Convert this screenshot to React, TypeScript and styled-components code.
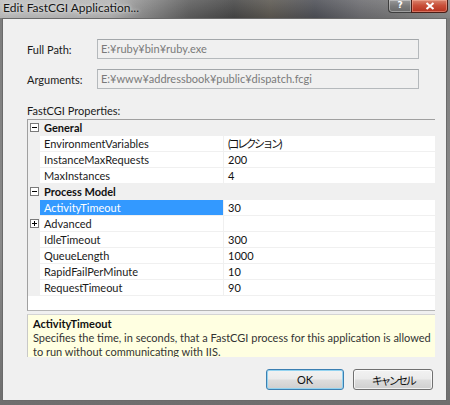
import React from "react";
import styled, { createGlobalStyle } from "styled-components";

const GlobalStyle = createGlobalStyle`
  html, body {
    margin: 0;
    padding: 0;
  }
  body {
    width: 450px;
    height: 405px;
    overflow: hidden;
    font-family: Lato, "Noto Sans CJK JP", sans-serif;
    font-size: 11px;
    color: #1a1a1a;
  }
`;

type Prop = { name: string; value: string; selected?: boolean; expandable?: boolean };
type Category = { title: string; items: Prop[] };

const categories: Category[] = [
  {
    title: "General",
    items: [
      { name: "EnvironmentVariables", value: "(コレクション)" },
      { name: "InstanceMaxRequests", value: "200" },
      { name: "MaxInstances", value: "4" },
    ],
  },
  {
    title: "Process Model",
    items: [
      { name: "ActivityTimeout", value: "30", selected: true },
      { name: "Advanced", value: "", expandable: true },
      { name: "IdleTimeout", value: "300" },
      { name: "QueueLength", value: "1000" },
      { name: "RapidFailPerMinute", value: "10" },
      { name: "RequestTimeout", value: "90" },
    ],
  },
];

const Expander = ({ open }: { open: boolean }) => (
  <svg width="9" height="9" viewBox="0 0 9 9">
    <rect x="0.5" y="0.5" width="8" height="8" fill="#fff" stroke="#7a7a7a" />
    <path d="M2 4.5h5" stroke="#000" />
    {!open && <path d="M4.5 2v5" stroke="#000" />}
  </svg>
);

export default function App() {
  return (
    <>
      <GlobalStyle />
      <Frame>
        <TitleBar>
          <TitleText>Edit FastCGI Application...</TitleText>
          <Captions>
            <HelpButton>?</HelpButton>
            <CloseButton>
              <svg width="10" height="8" viewBox="0 0 10 8">
                <path d="M1.5 1L8.5 7M8.5 1L1.5 7" stroke="#fff" strokeWidth="2" />
              </svg>
            </CloseButton>
          </Captions>
        </TitleBar>
        <Client>
          <Form>
            <FieldRow>
              <FieldLabel>Full Path:</FieldLabel>
              <TextBox>E:¥ruby¥bin¥ruby.exe</TextBox>
            </FieldRow>
            <FieldRow>
              <FieldLabel>Arguments:</FieldLabel>
              <TextBox>E:¥www¥addressbook¥public¥dispatch.fcgi</TextBox>
            </FieldRow>
          </Form>
          <SectionLabel>FastCGI Properties:</SectionLabel>
          <PropertyGrid>
            {categories.map((cat) => (
              <React.Fragment key={cat.title}>
                <CategoryRow>
                  <Gutter>
                    <Expander open />
                  </Gutter>
                  <CategoryTitle>{cat.title}</CategoryTitle>
                </CategoryRow>
                {cat.items.map((item) => (
                  <PropRow key={item.name}>
                    <Gutter>{item.expandable && <Expander open={false} />}</Gutter>
                    <NameCell $selected={item.selected}>{item.name}</NameCell>
                    <ValueCell $cjk={/[^\x00-\x7f]/.test(item.value)}>{item.value}</ValueCell>
                  </PropRow>
                ))}
              </React.Fragment>
            ))}
          </PropertyGrid>
          <Description>
            <DescTitle>ActivityTimeout</DescTitle>
            <DescText>
              Specifies the time, in seconds, that a FastCGI process for this application is allowed
              to run without communicating with IIS.
            </DescText>
          </Description>
          <ButtonBar>
            <DialogButton $default>OK</DialogButton>
            <DialogButton $cjk>キャンセル</DialogButton>
          </ButtonBar>
        </Client>
      </Frame>
    </>
  );
}

const Frame = styled.div`
  width: 450px;
  height: 405px;
  box-sizing: border-box;
  display: flex;
  flex-direction: column;
  background: linear-gradient(to bottom, #7c7c7c, #8a8a8a 60%, #6e6e6e);
`;

const TitleBar = styled.div`
  height: 18px;
  flex: none;
  display: flex;
  justify-content: space-between;
  align-items: flex-start;
  padding-left: 3px;
  background:
    linear-gradient(to bottom, rgba(255, 255, 255, 0.12), rgba(0, 0, 0, 0.05)),
    linear-gradient(
      to right,
      #bdbdbd 0%,
      #b2b2b2 24%,
      #8a8a8a 32%,
      #5c5c5c 42%,
      #454545 52%,
      #5a564f 60%,
      #4c4e55 70%,
      #6a6a6e 80%,
      #7a7a7a 90%,
      #8a8a8a 100%
    );
`;

const TitleText = styled.div`
  font-size: 12px;
  line-height: 16px;
  color: #151515;
  text-shadow: 0 0 6px #e6e6e6, 0 0 3px #e6e6e6;
`;

const Captions = styled.div`
  display: flex;
  margin-right: 2px;
  height: 13px;
`;

const HelpButton = styled.div`
  width: 22px;
  height: 12px;
  border: 1px solid #3e3e3e;
  border-top: none;
  border-right: none;
  border-bottom-left-radius: 4px;
  background: linear-gradient(to bottom, #9a9a9a, #7a7a7a 50%, #6a6a6a);
  box-shadow: inset 0 0 0 1px rgba(255, 255, 255, 0.35);
  color: #fff;
  font-family: "DejaVu Sans", sans-serif;
  font-size: 9px;
  font-weight: bold;
  line-height: 10px;
  text-align: center;
`;

const CloseButton = styled.div`
  width: 35px;
  height: 12px;
  border: 1px solid #4a1d16;
  border-top: none;
  border-bottom-right-radius: 4px;
  background: linear-gradient(to bottom, #d9856f, #c9503a 45%, #b5321f);
  box-shadow: inset 0 0 0 1px rgba(255, 190, 170, 0.45);
  display: flex;
  justify-content: center;
  align-items: center;
`;

const Client = styled.div`
  flex: 1;
  margin: 0 3px 4px 2px;
  border: 1px solid #6a6a6a;
  background: #f0f0f0;
  display: flex;
  flex-direction: column;
  padding: 0 11px 0 24px;
`;

const Form = styled.div`
  display: flex;
  flex-direction: column;
  gap: 10px;
  padding-top: 20px;
`;

const FieldRow = styled.div`
  display: flex;
  align-items: center;
  height: 20px;
`;

const FieldLabel = styled.div`
  width: 70px;
  flex: none;
  color: #1a1a1a;
`;

const TextBox = styled.div`
  width: 322px;
  height: 20px;
  box-sizing: border-box;
  border: 1px solid #b5b9bc;
  border-top-color: #a3a7aa;
  background: #f0f0f0;
  color: #7a7a7a;
  padding-left: 3px;
  line-height: 18px;
  white-space: nowrap;
`;

const SectionLabel = styled.div`
  margin-top: 14px;
  line-height: 15px;
  color: #1a1a1a;
`;

const PropertyGrid = styled.div`
  margin-top: 1px;
  height: 192px;
  box-sizing: border-box;
  border: 1px solid #a0a0a0;
  border-right: none;
  border-bottom-color: #b4b4b4;
  background: #fff;
  display: flex;
  flex-direction: column;
`;

const Row = styled.div`
  display: grid;
  grid-template-columns: 12px 184px 1fr;
  height: 16px;
  box-sizing: border-box;
  border-bottom: 1px solid #f0f0f0;
`;

const CategoryRow = styled(Row)`
  background: #f0f0f0;
`;

const PropRow = styled(Row)``;

const Gutter = styled.div`
  background: #f0f0f0;
  display: flex;
  align-items: center;
  justify-content: center;
  padding-left: 1px;
`;

const CategoryTitle = styled.div`
  grid-column: 2 / 4;
  padding-left: 4px;
  font-weight: bold;
  line-height: 15px;
  color: #111;
`;

const NameCell = styled.div<{ $selected?: boolean }>`
  padding-left: 4px;
  line-height: 15px;
  border-right: 1px solid #f0f0f0;
  background: ${(p) => (p.$selected ? "#3399ff" : "#fff")};
  color: ${(p) => (p.$selected ? "#fff" : "#1a1a1a")};
`;

const ValueCell = styled.div<{ $cjk?: boolean }>`
  padding-left: 4px;
  line-height: 15px;
  color: #111;
  letter-spacing: ${(p) => (p.$cjk ? "-2.5px" : "normal")};
  white-space: nowrap;
`;

const Description = styled.div`
  margin-top: 3px;
  height: 43px;
  box-sizing: border-box;
  overflow: hidden;
  border-top: 1px solid #d4d4d4;
  border-left: 1px solid #c8c8c8;
  background: #ffffe1;
  padding: 2px 4px 0 5px;
  line-height: 14px;
`;

const DescTitle = styled.div`
  font-weight: bold;
  color: #111;
`;

const DescText = styled.div`
  color: #333;
`;

const ButtonBar = styled.div`
  margin-top: 12px;
  display: flex;
  justify-content: flex-end;
  gap: 9px;
  padding-right: 2px;
`;

const DialogButton = styled.div<{ $default?: boolean; $cjk?: boolean }>`
  width: ${(p) => (p.$default ? "78px" : "80px")};
  height: 21px;
  box-sizing: border-box;
  border: 1px solid ${(p) => (p.$default ? "#3c7fb1" : "#707070")};
  border-radius: 3px;
  background: linear-gradient(to bottom, #f2f2f2 0%, #ebebeb 48%, #dddddd 52%, #cfcfcf 100%);
  box-shadow: inset 0 0 0 1px ${(p) => (p.$default ? "#93d3f0" : "rgba(255, 255, 255, 0.7)")};
  display: flex;
  align-items: center;
  justify-content: center;
  color: #111;
  letter-spacing: ${(p) => (p.$cjk ? "-2.5px" : "normal")};
`;
